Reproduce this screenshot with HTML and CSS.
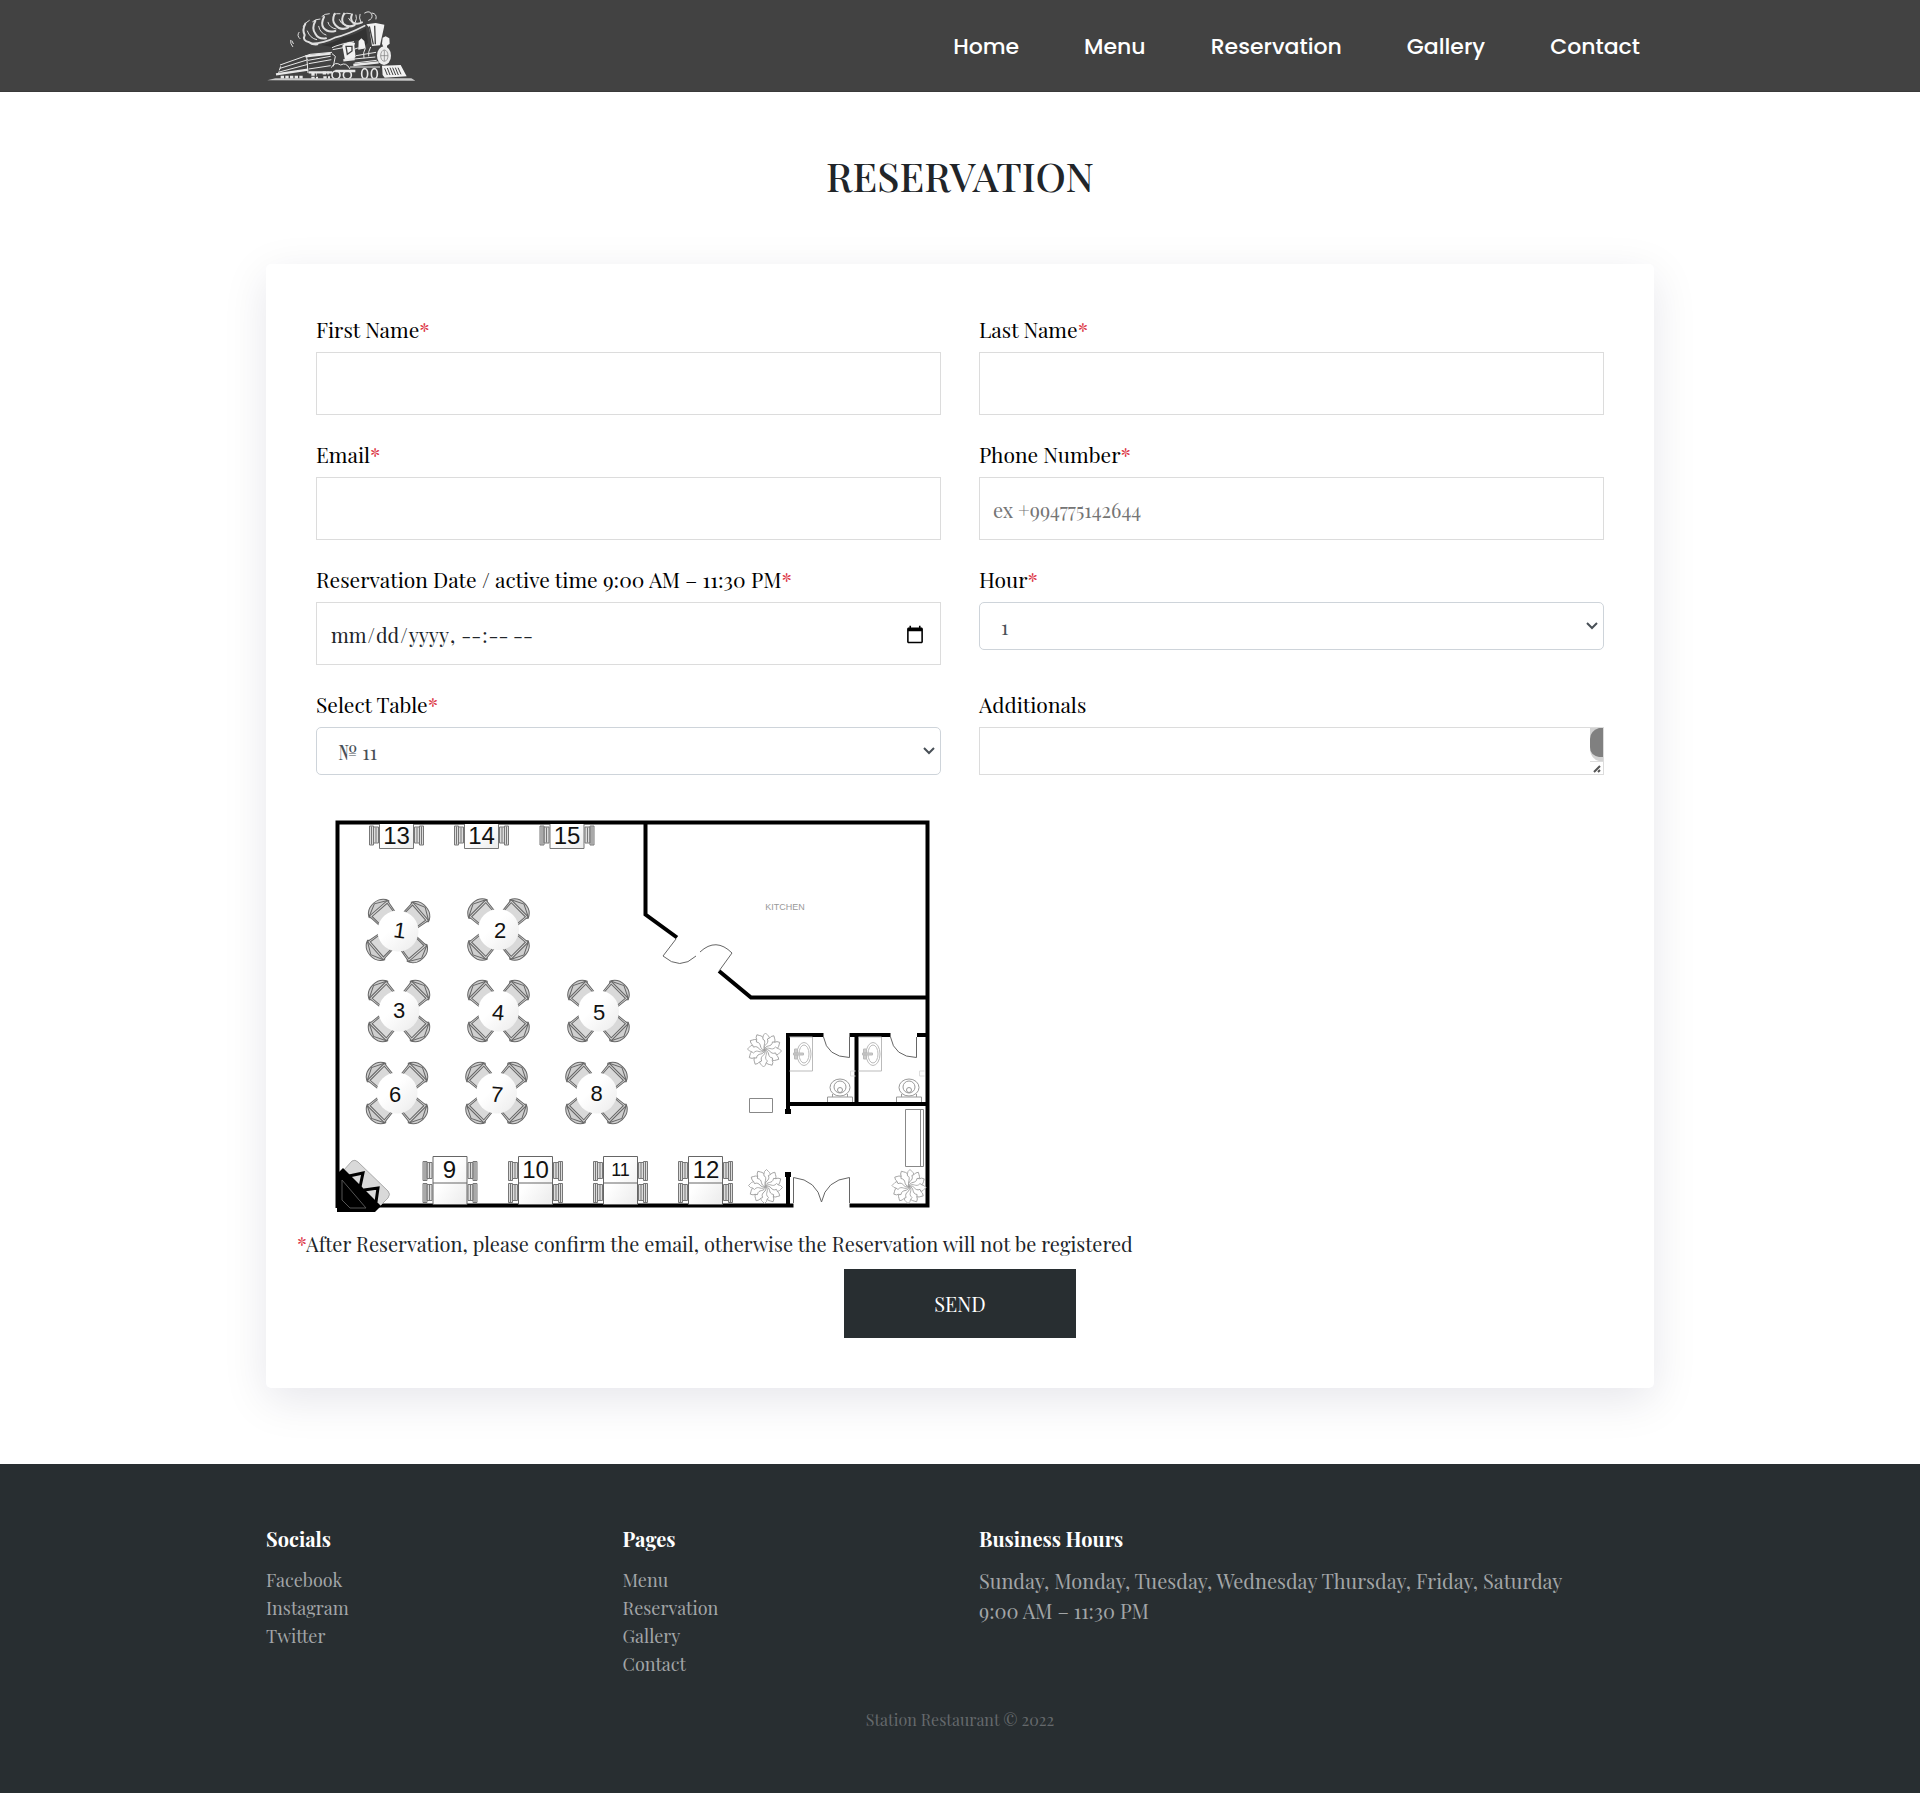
FILE: index.html
```html
<!DOCTYPE html>
<html lang="en">
<head>
<meta charset="utf-8">
<meta name="viewport" content="width=device-width, initial-scale=1">
<title>Reservation - Station Restaurant</title>
<link rel="stylesheet" href="styles.css">
</head>
<body>
<header class="site-header">
  <div class="container header-inner">
    <a class="logo" href="#" aria-label="Station Restaurant">
      <svg viewBox="48 26 450 222" width="150" height="74" aria-hidden="true">
        <g fill="none" stroke="#dedede" stroke-linecap="round">
          <path stroke-width="3" d="M122 120q-2 10 6 19M147 96q-8 10 3 19M130 130l-4-8"/>
          <path stroke-width="6" d="M166 70q-10 18-2 34q-8 18 14 22q12 8 24 6M196 62q-12 22 0 38q10 18 32 14M222 50q-10 20-2 32q12 16 36 10M254 40q-10 22 2 34q16 18 38 8M282 40q-10 18-2 30q14 14 34 4M306 42q-6 14 2 24q12 8 28 0"/>
          <path stroke-width="3" d="M160 78q6-12 18-18M188 64q8-8 22-8M216 48q8-8 22-8M250 44q8-6 20-4M280 42q10-6 22-2M318 44q4 10-2 22M330 42q-4 10 2 22M344 38q16-10 22 6q2 12-10 16M366 38q16 2 12 18M172 92q8 22 28 26M206 78q4 20 22 26M234 66q4 16 24 20M268 58q4 12 18 18M296 54q4 10 12 12"/>
          <path stroke-width="5" d="M184 130q40-2 70-18q40-10 90-36"/>
        </g>
        <path fill="#333" d="M214 134q40-6 66-24q38-6 68-28l6 46-18 14-10-24-44 8-36 14z"/>
        <path fill="#f2f2f2" d="M349 72l28-4 26 5-1 8-12 54-24 2-8-54zM396 130l2-18 9-4 11 6 1 16-8 6v10l-10-4zM326 122l8-8 9 8 4 22-22 4zM281 132l18-8 16 4-2 8 4 34-10 8-22 2-8-44z"/>
        <path fill="none" stroke="#424242" stroke-width="4" d="M358 78l12 54M374 76l2 56M288 138h18v14l-14 10z"/>
        <ellipse cx="402" cy="166" rx="21" ry="28" fill="#ededed"/>
        <ellipse cx="403" cy="166" rx="11" ry="17" fill="none" stroke="#777" stroke-width="2"/>
        <path stroke="#777" stroke-width="2" d="M392 166h22M403 150v32"/>
        <g fill="none" stroke="#e8e8e8" stroke-width="3">
          <path d="M246 142q20-10 66-18M248 148l32-6M90 194l90-32 66-6M90 204l84-26M84 216l90-24M92 198l-4 12M170 168l4 50M174 180l68-12M176 190l68-12M176 206l66-10M246 160l10 8-6 30M310 150q8-10 30-6M312 176l64-6M314 188l66-8M346 144q-8 12-4 30M362 140q-8 14-6 28M318 166l60-10M300 200h90M244 202q10-20 28-8 16-10 28 12"/>
          <path stroke-width="7" d="M78 222l96-14M166 168l76-8M176 216h70M256 212h60M310 194l76-8M280 180l34-4"/>
          <g stroke-width="5"><circle cx="258" cy="224" r="12"/><circle cx="292" cy="224" r="12"/><ellipse cx="344" cy="220" rx="9" ry="15"/><ellipse cx="373" cy="220" rx="9" ry="15"/></g>
          <path stroke-width="9" stroke-dasharray="10 4" d="M92 231h68M184 222h16M184 234h20M218 218h18M220 232h20"/>
        </g>
        <path fill="#f2f2f2" d="M396 196l56-2 18 34-66 4-6-8z"/>
        <path stroke="#424242" stroke-width="3" d="M404 204l8 20M412 203l8 21M420 202l9 22M428 202l9 22M436 202l9 22M444 202l9 20"/>
        <path fill="#c8c8c8" d="M52 240l24-6h408l12 7z"/>
      </svg>
    </a>
    <nav class="main-nav" aria-label="Main">
      <a href="#">Home</a>
      <a href="#">Menu</a>
      <a href="#">Reservation</a>
      <a href="#">Gallery</a>
      <a href="#">Contact</a>
    </nav>
  </div>
</header>

<main class="container">
  <h1 class="page-title">RESERVATION</h1>
  <form class="card">
    <div class="fields">
      <div class="field">
        <label for="first">First Name<span class="req">*</span></label>
        <input class="box" id="first" type="text">
      </div>
      <div class="field">
        <label for="last">Last Name<span class="req">*</span></label>
        <input class="box" id="last" type="text">
      </div>
      <div class="field">
        <label for="email">Email<span class="req">*</span></label>
        <input class="box" id="email" type="email">
      </div>
      <div class="field">
        <label for="phone">Phone Number<span class="req">*</span></label>
        <input class="box" id="phone" type="tel" placeholder="ex +994775142644">
      </div>
      <div class="field">
        <label for="date">Reservation Date / active time 9:00 AM – 11:30 PM<span class="req">*</span></label>
        <input class="box" id="date" type="datetime-local">
      </div>
      <div class="field">
        <label for="hour">Hour<span class="req">*</span></label>
        <select class="select" id="hour"><option>1</option><option>2</option><option>3</option></select>
      </div>
      <div class="field">
        <label for="table">Select Table<span class="req">*</span></label>
        <select class="select" id="table"><option>№ 11</option><option>№ 12</option></select>
      </div>
      <div class="field">
        <label for="more">Additionals</label>
        <div class="area-wrap">
          <textarea class="area" id="more"></textarea>
          <svg class="area-bar" width="13" height="46" viewBox="0 0 13 46" aria-hidden="true">
            <path fill="#d3d3d3" d="M0 0h13v33H9Q1 31 0 22z"/>
            <path fill="#808080" d="M13 0H9Q0 3 0 11v8q0 8 9 10h4z"/>
            <path fill="#fff" stroke="#dcdcdc" d="M-.5 46V33.500H14V46"/>
            <path stroke="#555" stroke-width="2" d="M4 44l6-6M8 44l2-2"/>
          </svg>
        </div>
      </div>
      <svg class="plan" viewBox="316 800 625 422" role="img" aria-label="Restaurant floor plan">
        <defs>
          <linearGradient id="top" x1="0" y1="0" x2="1" y2="1"><stop offset="0.4" stop-color="#fff"/><stop offset="1" stop-color="#ebebeb"/></linearGradient>
          <g id="chair" stroke="#666" stroke-width="1">
            <path fill="#cfcfcf" d="M-13-29Q-11-34-6-36Q0-38 6-36Q11-34 13-29L10-26H-10z"/>
            <path fill="#d9d9d9" d="M-10-12L-12-30H12L10-12z"/>
            <path fill="none" d="M-12-30L0-36L12-30M-9-14L-10-28H10L9-14"/>
          </g>
          <g id="round">
            <use href="#chair" transform="rotate(45)"/><use href="#chair" transform="rotate(135)"/>
            <use href="#chair" transform="rotate(225)"/><use href="#chair" transform="rotate(315)"/>
            <circle r="20.500" fill="url(#top)"/>
          </g>
          <g id="seat" fill="#dcdcdc" stroke="#777" stroke-width="1">
            <path d="M18 1.500h5v16h-5zM23 .5h4v19h-4zM-18 1.500h-5v16h5zM-23 .5h-4v19h4z"/>
            <path d="M20.500 2v15M25 1v18M-20.500 2v15M-25 1v18"/>
          </g>
          <g id="booth">
            <use href="#seat" y="5"/><use href="#seat" y="27"/>
            <path d="M-17 .5h34v48h-34zM-17 27h34" fill="url(#top)" stroke="#666"/>
          </g>
          <g id="small"><use href="#seat" y="3"/><path d="M-17 0h34v26h-34z" fill="url(#top)" stroke="#777"/></g>
          <path id="leaf" d="M0 0C-5-4 2-7-3-11Q-1-13-1-15L1-17Q3-15 4-14Q6-12 4-10C7-7 0-4 0 0"/>
          <g id="plant" fill="#fff" stroke="#999" stroke-width=".8">
            <use href="#leaf"/><use href="#leaf" transform="rotate(30)"/><use href="#leaf" transform="rotate(60)"/><use href="#leaf" transform="rotate(90)"/>
            <use href="#leaf" transform="rotate(120)"/><use href="#leaf" transform="rotate(150)"/><use href="#leaf" transform="rotate(180)"/><use href="#leaf" transform="rotate(210)"/>
            <use href="#leaf" transform="rotate(240)"/><use href="#leaf" transform="rotate(270)"/><use href="#leaf" transform="rotate(300)"/><use href="#leaf" transform="rotate(330)"/>
          </g>
          <g id="bath" fill="none" stroke="#bbb" stroke-width="1">
            <path d="M0 0H23V34H0"/>
            <ellipse cx="14.500" cy="17" rx="7" ry="11.500"/><ellipse cx="14.500" cy="17" rx="5" ry="9"/>
            <path fill="#ccc" d="M4 16h10v2H4zM5 12h3v4H5zM5 18h3v4H5z"/>
            <g stroke="#999"><ellipse cx="50.500" cy="50.500" rx="10" ry="8.500"/><ellipse cx="50.500" cy="50" rx="6" ry="6"/><circle cx="50.500" cy="53" r="2.500"/>
            <path d="M43 57v3M58 57v3M38 65v-5h25v5"/></g>
            <path stroke="#ddd" d="M66 34h-5v5h5"/>
          </g>
        </defs>
        <g fill="none" stroke="#000" stroke-width="4">
          <path d="M337.500 1209V823.500H927.500V1206.500H849.500M793.500 1206.500H337.500M645.500 823V915.500L677 938.500M719 972L751 998.500H927"/>
          <path d="M823.500 1036H788V1115M849.500 1036H890.500M917 1036H927M856.500 1036V1105M788 1105H927M788 1173V1206"/>
          <path stroke-width="6" d="M788 1110v5M788 1173v5"/>
        </g>
        <g fill="none" stroke="#666" stroke-width="1">
          <path d="M676 940L663 957Q680 972 696 957M700 953Q716 938 732 954L719 972"/>
          <path d="M823.500 1038Q827 1058 849.500 1058.500V1038M890.500 1038Q894 1058 916.500 1058.500V1038"/>
          <path d="M793.500 1204V1178.500Q817 1181 821.500 1203Q826 1181 849.500 1178.500V1204"/>
          <path stroke="#888" d="M749.500 1099.500h23v14h-23zM905.500 1110.500h18v57h-18zM920.500 1110v57"/>
        </g>
        <use href="#bath" x="789.500" y="1038"/><use href="#bath" x="858.500" y="1038"/>
        <use href="#plant" x="764.500" y="1051"/><use href="#plant" x="765.500" y="1187.500"/><use href="#plant" x="909" y="1187.500"/>
        <use href="#small" x="396.500" y="823.500"/><use href="#small" x="481.500" y="823.500"/><use href="#small" x="567" y="823.500"/>
        <path d="M336 823.500H590" stroke="#000" stroke-width="3"/>
        <use href="#round" x="398" y="932" transform="rotate(4 398 932)"/><use href="#round" x="498.500" y="930.500"/>
        <use href="#round" x="399" y="1012"/><use href="#round" x="498.500" y="1012"/><use href="#round" x="598.500" y="1012"/>
        <use href="#round" x="397" y="1094"/><use href="#round" x="496.500" y="1094"/><use href="#round" x="596.500" y="1094"/>
        <use href="#booth" x="450" y="1157"/><use href="#booth" x="535.500" y="1157"/><use href="#booth" x="620.500" y="1157"/><use href="#booth" x="705.500" y="1157"/>
        <path fill="#d9d9d9" stroke="#aaa" d="M343 1172L352 1162Q355 1160 358 1163L388 1192Q391 1195 388 1199L379 1208z"/>
        <path fill="none" stroke="#000" stroke-width="3" d="M349 1177L363 1174L360 1188M364 1191L378 1189L376 1203"/>
        <path d="M337 1175L343 1169L381 1207L375 1213H337z"/>
        <path fill="none" stroke="#555" d="M342 1181V1201L350 1209H366z"/>
        <g class="plan-num">
          <text x="396.500" y="845" class="wide">13</text><text x="481.500" y="845" class="wide">14</text><text x="567" y="845" class="wide">15</text>
          <text x="400" y="939" transform="rotate(8 400 931)">1</text><text x="500" y="939">2</text>
          <text x="399" y="1019">3</text><text x="498.500" y="1021" transform="rotate(5 498 1012)">4</text><text x="599" y="1021">5</text>
          <text x="395" y="1103">6</text><text x="497" y="1103" transform="rotate(5 497 1095)">7</text><text x="596.500" y="1102">8</text>
          <text x="449.500" y="1179" class="wide">9</text><text x="535.500" y="1179" class="wide">10</text><text x="620.500" y="1177" class="narrow">11</text><text x="706" y="1179" class="wide">12</text>
        </g>
        <text x="785" y="911" class="plan-room">KITCHEN</text>
      </svg>
    </div>
    <p class="note"><span class="req">*</span>After Reservation, please confirm the email, otherwise the Reservation will not be registered</p>
    <button class="send" type="button">SEND</button>
  </form>
</main>

<footer class="site-footer">
  <div class="container footer-grid">
    <section>
      <h2>Socials</h2>
      <ul><li><a href="#">Facebook</a></li><li><a href="#">Instagram</a></li><li><a href="#">Twitter</a></li></ul>
    </section>
    <section>
      <h2>Pages</h2>
      <ul><li><a href="#">Menu</a></li><li><a href="#">Reservation</a></li><li><a href="#">Gallery</a></li><li><a href="#">Contact</a></li></ul>
    </section>
    <section class="wide-col">
      <h2>Business Hours</h2>
      <p class="hours">Sunday, Monday, Tuesday, Wednesday Thursday, Friday, Saturday<br>9:00 AM – 11:30 PM</p>
    </section>
  </div>
  <p class="copyright">Station Restaurant © 2022</p>
</footer>
</body>
</html>
```
FILE: styles.css
```css
* { box-sizing: border-box; }
body {
  margin: 0;
  background: #fff;
  color: #212529;
  font-family: "Playfair Display", "Liberation Serif", serif;
  font-size: 20px;
  line-height: 30px;
}
.container { max-width: 1388px; margin: 0 auto; }

.site-header { background: #424242; border-bottom: 1px solid #3a3a3a; }
.header-inner { display: flex; align-items: center; justify-content: space-between; min-height: 91px; }
.logo { display: block; height: 74px; }
.main-nav { display: flex; gap: 65px; padding: 2px 14px 0 0; }
.main-nav a { color: #fff; text-decoration: none; font: 500 22px/30px Poppins, Inter, sans-serif; }

.page-title { margin: 54px 0 58px; text-align: center; font-size: 40px; line-height: 60px; font-weight: 500; }

.card {
  display: flex;
  flex-direction: column;
  padding: 50px 31px;
  border-radius: 5px;
  background: #fff;
  box-shadow: 0 12px 45px rgba(8, 5, 56, 0.1);
}
.fields { display: grid; grid-template-columns: 1fr 1fr; gap: 24px 38px; padding: 0 19px; }
.field { display: flex; flex-direction: column; gap: 8px; }
.field label { color: #000; font-size: 21px; }
.req { color: #dc3545; }
.box, .select, .area { display: block; width: 100%; font: inherit; background: #fff; }
.box { height: 63px; padding: 2px 13px 0; border: 1px solid #dcdcdc; color: #212529; }
.box::placeholder { color: #757575; }
.select {
  height: 48px;
  padding: 7px 30px 5px 21px;
  border: 1px solid #ced4da;
  border-radius: 5px;
  color: #495057;
  appearance: none;
  background: #fff url("data:image/svg+xml,%3Csvg xmlns='http://www.w3.org/2000/svg' width='12' height='8' fill='none' stroke='%23495057' stroke-width='2'%3E%3Cpath d='M1 1l5 5 5-5'/%3E%3C/svg%3E") no-repeat right 5px center;
}
.area-wrap { position: relative; }
.area { height: 48px; padding: 8px 24px 8px 13px; border: 1px solid #dcdcdc; resize: none; }
.area-bar { position: absolute; top: 1px; right: 1px; }
.plan { display: block; width: 100%; }
.plan-num { font: 22px "Liberation Sans", sans-serif; text-anchor: middle; fill: #111; }
.plan-num .wide { font-size: 24px; }
.plan-num .narrow { font-size: 18px; }
.plan-room { font: 9px "Liberation Sans", sans-serif; text-anchor: middle; fill: #999; }

.note { margin: 8px 0 10px; }
.send {
  align-self: center;
  width: 232px;
  height: 69px;
  border: 0;
  background: #282e31;
  color: #fff;
  font: inherit;
}

.site-footer { margin-top: 76px; padding: 60px 0 58px; background: #282e31; color: #fff; }
.footer-grid { display: grid; grid-template-columns: repeat(4, 1fr); column-gap: 38px; }
.wide-col { grid-column: span 2; }
.footer-grid h2 { margin: 0 0 12px; font-size: 20px; line-height: 30px; font-weight: 700; }
.footer-grid ul { margin: 0; padding: 0; list-style: none; font-size: 18px; line-height: 28px; }
.footer-grid a { color: #a2a5a7; text-decoration: none; }
.hours { margin: 0; color: #a2a5a7; }
.copyright { margin: 27px 0 0; text-align: center; color: #65696c; font-size: 16px; }
```
